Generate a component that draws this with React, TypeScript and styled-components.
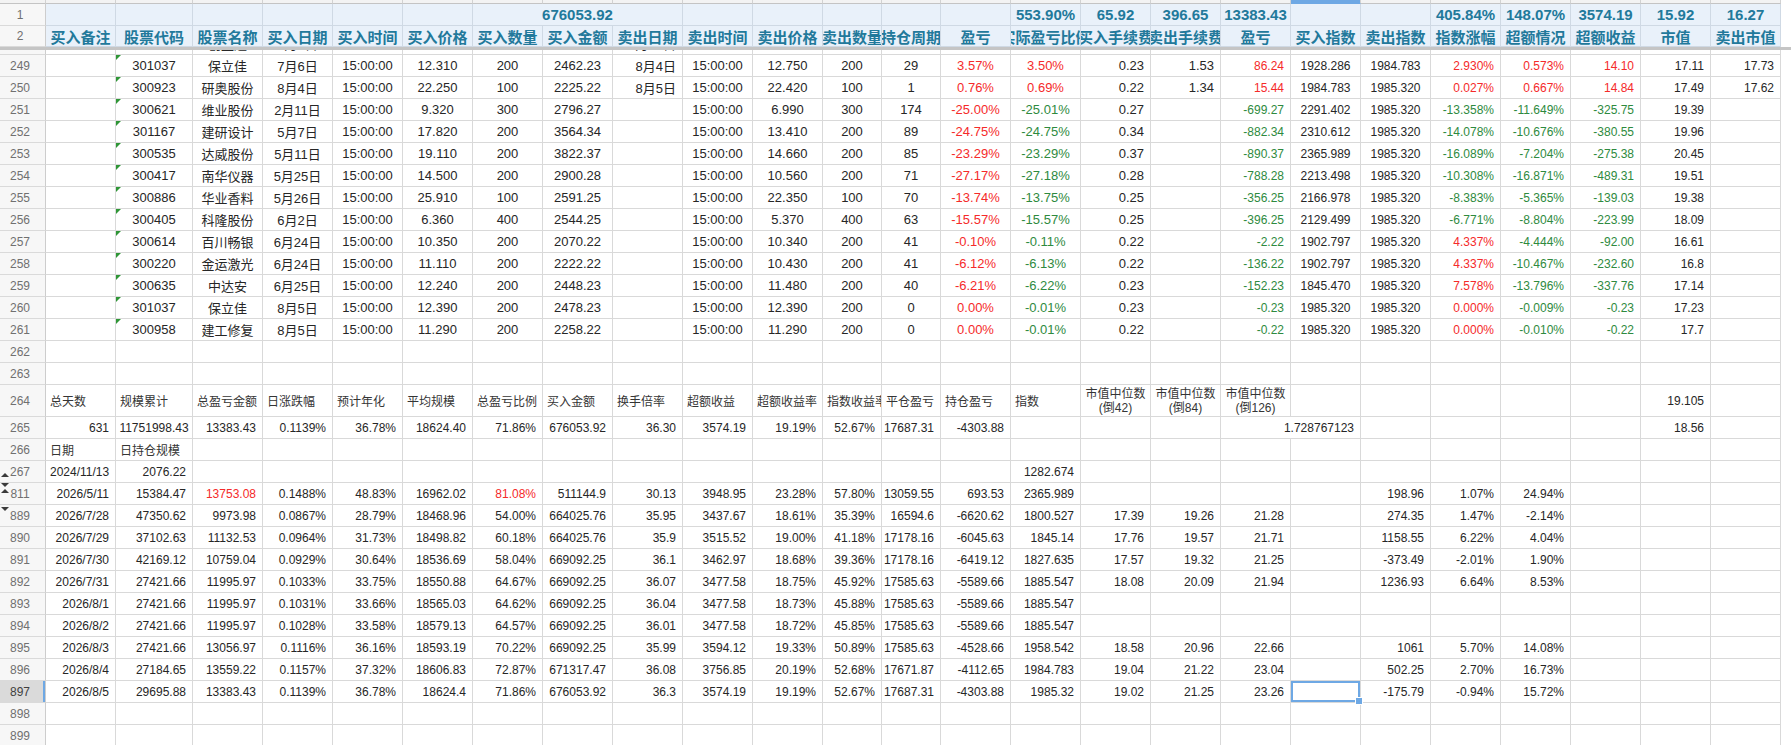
import React from "react";
import styled, { createGlobalStyle, css } from "styled-components";

type Align = "left" | "center" | "right";
type Tone = "plain" | "red" | "green" | "label";

interface Spec {
  v?: React.ReactNode;
  a?: Align;
  t?: Tone;
  span?: number;
  flag?: boolean;
  sel?: boolean;
  fs?: number;
}

// column widths: row numbers + 25 sheet columns
const COLS = [46, 70, 77, 70, 70, 70, 70, 70, 70, 70, 70, 70, 59, 59, 70, 70, 70, 70, 70, 70, 70, 70, 70, 70, 70, 70];
const GRID = COLS.map((w) => `${w}px`).join(" ");
const SELECTED_COL = 18;

const TONE: Record<Tone, string> = {
  plain: "#262626",
  red: "#f52a2a",
  green: "#2e8a3e",
  label: "#353535",
};

const GlobalStyle = createGlobalStyle`
  * { box-sizing: border-box; }
  html, body { margin: 0; padding: 0; background: #fff; overflow: hidden; }
  body { font-family: "Liberation Sans", "Noto Sans CJK SC", Arial, sans-serif; }
`;

const Sheet = styled.div`
  width: 1791px;
  height: 745px;
  overflow: hidden;
  display: flex;
  flex-direction: column;
  background: #fff;
`;

const Row = styled.div<{ $h?: number }>`
  display: grid;
  grid-template-columns: ${GRID};
  height: ${(p) => p.$h ?? 22}px;
  flex: none;
`;

const TopStrip = styled(Row)`
  height: 4px;
`;

const StripCell = styled.div<{ $active?: boolean }>`
  background: #f3f3f3;
  border-right: 1px solid #d2d2d2;
  border-bottom: 1px solid #c4c4c4;
  ${(p) =>
    p.$active &&
    css`
      background: #6ea8e4;
      border-bottom-color: #6ea8e4;
    `}
`;

const FrozenLine = styled.div`
  flex: none;
  height: 3px;
  background: #c5c5c5;
`;

// only the bottom sliver of the row above the scroll position shows
const PartialRow = styled.div`
  flex: none;
  height: 5px;
  overflow: hidden;
  display: flex;
  flex-direction: column;
  justify-content: flex-end;
`;

const RowNum = styled.div<{ $active?: boolean }>`
  position: relative;
  display: flex;
  align-items: center;
  justify-content: center;
  padding-right: 5px;
  font-size: 12px;
  color: ${(p) => (p.$active ? "#3f3f3f" : "#707070")};
  background: ${(p) => (p.$active ? "#dadada" : "#f7f7f7")};
  border-right: 1px solid #cdcdcd;
  border-bottom: 1px solid #dadada;
  ${(p) =>
    p.$active &&
    css`
      box-shadow: inset -2px 0 0 #6ea8e4;
    `}
`;

const Fold = styled.span<{ $dir: "up" | "down"; $top: number }>`
  position: absolute;
  left: 1px;
  top: ${(p) => p.$top}px;
  width: 0;
  height: 0;
  border-left: 4px solid transparent;
  border-right: 4px solid transparent;
  ${(p) => (p.$dir === "up" ? "border-bottom: 4px solid #3b3b3b;" : "border-top: 4px solid #3b3b3b;")}
`;

const HeadCell = styled.div<{ $span?: number }>`
  grid-column: span ${(p) => p.$span ?? 1};
  display: flex;
  align-items: center;
  justify-content: center;
  min-width: 0;
  overflow: hidden;
  white-space: nowrap;
  background: #e9f1fa;
  color: #22799b;
  font-size: 15px;
  font-weight: 700;
  border-right: 1px solid #cfd9e4;
  border-bottom: 1px solid #cfd9e4;
`;

const Cell = styled.div<{
  $align: Align;
  $tone: Tone;
  $span: number;
  $fs: number;
  $flag?: boolean;
  $sel?: boolean;
}>`
  position: relative;
  grid-column: span ${(p) => p.$span};
  display: flex;
  align-items: center;
  justify-content: ${(p) => (p.$align === "left" ? "flex-start" : p.$align === "center" ? "center" : "flex-end")};
  padding: ${(p) => (p.$align === "left" ? "0 0 0 4px" : p.$align === "center" ? "0" : "0 6px 0 0")};
  min-width: 0;
  overflow: hidden;
  white-space: nowrap;
  font-size: ${(p) => p.$fs}px;
  color: ${(p) => TONE[p.$tone]};
  border-right: 1px solid #d9d9d9;
  border-bottom: 1px solid #d9d9d9;

  ${(p) =>
    p.$flag &&
    css`
      &::before {
        content: "";
        position: absolute;
        left: 0;
        top: 0;
        border-top: 5px solid #2f9636;
        border-right: 5px solid transparent;
      }
    `}

  ${(p) =>
    p.$sel &&
    css`
      overflow: visible;
      z-index: 1;
      box-shadow: inset 0 0 0 2px #6ea8e4;
      &::after {
        content: "";
        position: absolute;
        right: -3px;
        bottom: -3px;
        width: 6px;
        height: 6px;
        background: #6ea8e4;
        border: 1px solid #fff;
      }
    `}
`;

const TwoLine = styled.span`
  display: flex;
  flex-direction: column;
  align-items: center;
  line-height: 14px;
`;

/* ---------- data ---------- */

const HEADERS = [
  "买入备注", "股票代码", "股票名称", "买入日期", "买入时间", "买入价格", "买入数量", "买入金额",
  "卖出日期", "卖出时间", "卖出价格", "卖出数量", "持仓周期", "盈亏", "实际盈亏比例", "买入手续费",
  "卖出手续费", "盈亏", "买入指数", "卖出指数", "指数涨幅", "超额情况", "超额收益", "市值", "卖出市值",
];

const TOTALS: { v: string; span?: number }[] = [
  { v: "" }, { v: "" }, { v: "" }, { v: "" }, { v: "" }, { v: "" },
  { v: "676053.92", span: 3 },
  { v: "" }, { v: "" }, { v: "" }, { v: "" }, { v: "" },
  { v: "553.90%" }, { v: "65.92" }, { v: "396.65" }, { v: "13383.43" },
  { v: "" }, { v: "" },
  { v: "405.84%" }, { v: "148.07%" }, { v: "3574.19" }, { v: "15.92" }, { v: "16.27" },
];

const TRADE_248 = ["", "300991", "创益通", "7月2日", "15:00:00", "17.300", "200", "3460.27", "7月31日", "15:00:00", "17.820", "200", "29", "3.01%", "2.94%", "0.27", "1.57", "101.76", "1855.632", "1918.271", "3.376%", "0.245%", "8.47", "16.95", "17.36"];

const TRADES: [number, string[]][] = [
  [249, ["", "301037", "保立佳", "7月6日", "15:00:00", "12.310", "200", "2462.23", "8月4日", "15:00:00", "12.750", "200", "29", "3.57%", "3.50%", "0.23", "1.53", "86.24", "1928.286", "1984.783", "2.930%", "0.573%", "14.10", "17.11", "17.73"]],
  [250, ["", "300923", "研奥股份", "8月4日", "15:00:00", "22.250", "100", "2225.22", "8月5日", "15:00:00", "22.420", "100", "1", "0.76%", "0.69%", "0.22", "1.34", "15.44", "1984.783", "1985.320", "0.027%", "0.667%", "14.84", "17.49", "17.62"]],
];

// open positions: code, name, date, buy, qty, amount, last, days, pl, real, fee, profit, buyIdx, idxChg, excess, excessAmt, mv
const OPEN: [number, string[]][] = [
  [251, ["300621", "维业股份", "2月11日", "9.320", "300", "2796.27", "6.990", "174", "-25.00%", "-25.01%", "0.27", "-699.27", "2291.402", "-13.358%", "-11.649%", "-325.75", "19.39"]],
  [252, ["301167", "建研设计", "5月7日", "17.820", "200", "3564.34", "13.410", "89", "-24.75%", "-24.75%", "0.34", "-882.34", "2310.612", "-14.078%", "-10.676%", "-380.55", "19.96"]],
  [253, ["300535", "达威股份", "5月11日", "19.110", "200", "3822.37", "14.660", "85", "-23.29%", "-23.29%", "0.37", "-890.37", "2365.989", "-16.089%", "-7.204%", "-275.38", "20.45"]],
  [254, ["300417", "南华仪器", "5月25日", "14.500", "200", "2900.28", "10.560", "71", "-27.17%", "-27.18%", "0.28", "-788.28", "2213.498", "-10.308%", "-16.871%", "-489.31", "19.51"]],
  [255, ["300886", "华业香料", "5月26日", "25.910", "100", "2591.25", "22.350", "70", "-13.74%", "-13.75%", "0.25", "-356.25", "2166.978", "-8.383%", "-5.365%", "-139.03", "19.38"]],
  [256, ["300405", "科隆股份", "6月2日", "6.360", "400", "2544.25", "5.370", "63", "-15.57%", "-15.57%", "0.25", "-396.25", "2129.499", "-6.771%", "-8.804%", "-223.99", "18.09"]],
  [257, ["300614", "百川畅银", "6月24日", "10.350", "200", "2070.22", "10.340", "41", "-0.10%", "-0.11%", "0.22", "-2.22", "1902.797", "4.337%", "-4.444%", "-92.00", "16.61"]],
  [258, ["300220", "金运激光", "6月24日", "11.110", "200", "2222.22", "10.430", "41", "-6.12%", "-6.13%", "0.22", "-136.22", "1902.797", "4.337%", "-10.467%", "-232.60", "16.8"]],
  [259, ["300635", "中达安", "6月25日", "12.240", "200", "2448.23", "11.480", "40", "-6.21%", "-6.22%", "0.23", "-152.23", "1845.470", "7.578%", "-13.796%", "-337.76", "17.14"]],
  [260, ["301037", "保立佳", "8月5日", "12.390", "200", "2478.23", "12.390", "0", "0.00%", "-0.01%", "0.23", "-0.23", "1985.320", "0.000%", "-0.009%", "-0.23", "17.23"]],
  [261, ["300958", "建工修复", "8月5日", "11.290", "200", "2258.22", "11.290", "0", "0.00%", "-0.01%", "0.22", "-0.22", "1985.320", "0.000%", "-0.010%", "-0.22", "17.7"]],
];

const openRow = (o: string[]) => [
  "", o[0], o[1], o[2], "15:00:00", o[3], o[4], o[5], "", "15:00:00", o[6], o[4], o[7], o[8], o[9], o[10],
  "", o[11], o[12], "1985.320", o[13], o[14], o[15], o[16], "",
];

const DAILY: [number, string[]][] = [
  [811, ["2026/5/11", "15384.47", "13753.08", "0.1488%", "48.83%", "16962.02", "81.08%", "511144.9", "30.13", "3948.95", "23.28%", "57.80%", "13059.55", "693.53", "2365.989", "", "", "", "", "198.96", "1.07%", "24.94%"]],
  [889, ["2026/7/28", "47350.62", "9973.98", "0.0867%", "28.79%", "18468.96", "54.00%", "664025.76", "35.95", "3437.67", "18.61%", "35.39%", "16594.6", "-6620.62", "1800.527", "17.39", "19.26", "21.28", "", "274.35", "1.47%", "-2.14%"]],
  [890, ["2026/7/29", "37102.63", "11132.53", "0.0964%", "31.73%", "18498.82", "60.18%", "664025.76", "35.9", "3515.52", "19.00%", "41.18%", "17178.16", "-6045.63", "1845.14", "17.76", "19.57", "21.71", "", "1158.55", "6.22%", "4.04%"]],
  [891, ["2026/7/30", "42169.12", "10759.04", "0.0929%", "30.64%", "18536.69", "58.04%", "669092.25", "36.1", "3462.97", "18.68%", "39.36%", "17178.16", "-6419.12", "1827.635", "17.57", "19.32", "21.25", "", "-373.49", "-2.01%", "1.90%"]],
  [892, ["2026/7/31", "27421.66", "11995.97", "0.1033%", "33.75%", "18550.88", "64.67%", "669092.25", "36.07", "3477.58", "18.75%", "45.92%", "17585.63", "-5589.66", "1885.547", "18.08", "20.09", "21.94", "", "1236.93", "6.64%", "8.53%"]],
  [893, ["2026/8/1", "27421.66", "11995.97", "0.1031%", "33.66%", "18565.03", "64.62%", "669092.25", "36.04", "3477.58", "18.73%", "45.88%", "17585.63", "-5589.66", "1885.547"]],
  [894, ["2026/8/2", "27421.66", "11995.97", "0.1028%", "33.58%", "18579.13", "64.57%", "669092.25", "36.01", "3477.58", "18.72%", "45.85%", "17585.63", "-5589.66", "1885.547"]],
  [895, ["2026/8/3", "27421.66", "13056.97", "0.1116%", "36.16%", "18593.19", "70.22%", "669092.25", "35.99", "3594.12", "19.33%", "50.89%", "17585.63", "-4528.66", "1958.542", "18.58", "20.96", "22.66", "", "1061", "5.70%", "14.08%"]],
  [896, ["2026/8/4", "27184.65", "13559.22", "0.1157%", "37.32%", "18606.83", "72.87%", "671317.47", "36.08", "3756.85", "20.19%", "52.68%", "17671.87", "-4112.65", "1984.783", "19.04", "21.22", "23.04", "", "502.25", "2.70%", "16.73%"]],
  [897, ["2026/8/5", "29695.88", "13383.43", "0.1139%", "36.78%", "18624.4", "71.86%", "676053.92", "36.3", "3574.19", "19.19%", "52.67%", "17687.31", "-4303.88", "1985.32", "19.02", "21.25", "23.26", "", "-175.79", "-0.94%", "15.72%"]],
];

const SUMMARY_LABELS = [
  "总天数", "规模累计", "总盈亏金额", "日涨跌幅", "预计年化", "平均规模", "总盈亏比例", "买入金额",
  "换手倍率", "超额收益", "超额收益率", "指数收益率", "平仓盈亏", "持仓盈亏", "指数",
];

/* ---------- spec builders ---------- */

const UP_ALIGN: Align[] = [
  "left", "center", "center", "center", "center", "center", "center", "center", "right", "center",
  "center", "center", "center", "center", "center", "right", "right", "right", "center", "center",
  "right", "right", "right", "right", "right",
];
const SIGNED = [14, 17, 20, 21, 22];

function tradeSpecs(vals: string[]): Spec[] {
  return vals.map((v, i) => ({
    v,
    a: UP_ALIGN[i],
    t: i === 13 ? "red" : SIGNED.includes(i) && v ? (v.startsWith("-") ? "green" : "red") : "plain",
    flag: i === 1,
    fs: i >= 17 ? 12 : 13,
  }));
}

function pad(specs: Spec[]): Spec[] {
  const used = specs.reduce((n, s) => n + (s.span ?? 1), 0);
  return [...specs, ...Array.from({ length: 25 - used }, () => ({}))];
}

function dailySpecs(vals: string[], red: number[] = [], sel?: number): Spec[] {
  return pad(vals.map((v, i) => ({ v, t: red.includes(i) ? "red" : "plain", sel: i === sel })));
}

const median = (n: number) => (
  <TwoLine>
    <span>市值中位数</span>
    <span>(倒{n})</span>
  </TwoLine>
);

const summaryHead: Spec[] = pad([
  ...SUMMARY_LABELS.map((v): Spec => ({ v, a: "left", t: "label" })),
  { v: median(42), a: "center", t: "label" },
  { v: median(84), a: "center", t: "label" },
  { v: median(126), a: "center", t: "label" },
  {}, {}, {}, {}, {},
  { v: "19.105" },
]);

const summaryValues: Spec[] = pad([
  { v: "631" }, { v: "11751998.43", a: "center" }, { v: "13383.43" }, { v: "0.1139%" }, { v: "36.78%" },
  { v: "18624.40" }, { v: "71.86%" }, { v: "676053.92" }, { v: "36.30" }, { v: "3574.19" },
  { v: "19.19%" }, { v: "52.67%" }, { v: "17687.31" }, { v: "-4303.88" },
  {}, {}, {},
  { v: "1.728767123", span: 2 },
  {}, {}, {}, {},
  { v: "18.56" },
]);

const dailyHead: Spec[] = pad([
  { v: "日期", a: "left", t: "label" },
  { v: "日持仓规模", a: "left", t: "label" },
]);

const firstDay: Spec[] = pad([
  { v: "2024/11/13", a: "left" }, { v: "2076.22" },
  {}, {}, {}, {}, {}, {}, {}, {}, {}, {}, {}, {},
  { v: "1282.674" },
]);

const blank: Spec[] = pad([]);

/* ---------- rows ---------- */

function SheetRow({
  num,
  cells,
  h,
  active,
  folds,
  fs = 12,
}: {
  num: number;
  cells: Spec[];
  h?: number;
  active?: boolean;
  folds?: React.ReactNode;
  fs?: number;
}) {
  return (
    <Row $h={h}>
      <RowNum $active={active}>
        {folds}
        {num}
      </RowNum>
      {cells.map((c, i) => (
        <Cell
          key={i}
          $align={c.a ?? "right"}
          $tone={c.t ?? "plain"}
          $span={c.span ?? 1}
          $fs={c.fs ?? fs}
          $flag={c.flag}
          $sel={c.sel}
        >
          {c.v}
        </Cell>
      ))}
    </Row>
  );
}

export default function App() {
  return (
    <>
      <GlobalStyle />
      <Sheet>
        <TopStrip>
          {COLS.map((_, i) => (
            <StripCell key={i} $active={i === SELECTED_COL + 1} />
          ))}
        </TopStrip>

        <Row>
          <RowNum>1</RowNum>
          {TOTALS.map((c, i) => (
            <HeadCell key={i} $span={c.span}>
              {c.v}
            </HeadCell>
          ))}
        </Row>
        <Row $h={21}>
          <RowNum>2</RowNum>
          {HEADERS.map((h, i) => (
            <HeadCell key={i}>{h}</HeadCell>
          ))}
        </Row>
        <FrozenLine />

        <PartialRow>
          <SheetRow num={248} cells={tradeSpecs(TRADE_248)} />
        </PartialRow>
        {TRADES.map(([n, vals]) => (
          <SheetRow key={n} num={n} cells={tradeSpecs(vals)} />
        ))}
        {OPEN.map(([n, vals]) => (
          <SheetRow key={n} num={n} cells={tradeSpecs(openRow(vals))} />
        ))}

        <SheetRow num={262} cells={blank} />
        <SheetRow num={263} cells={blank} />
        <SheetRow num={264} h={32} cells={summaryHead} />
        <SheetRow num={265} cells={summaryValues} />
        <SheetRow num={266} cells={dailyHead} />
        <SheetRow num={267} cells={firstDay} folds={<Fold $dir="up" $top={12} />} />

        {DAILY.map(([n, vals]) => (
          <SheetRow
            key={n}
            num={n}
            active={n === 897}
            cells={dailySpecs(vals, n === 811 ? [2, 6] : [], n === 897 ? SELECTED_COL : undefined)}
            folds={
              n === 811 ? (
                <>
                  <Fold $dir="down" $top={0} />
                  <Fold $dir="up" $top={6} />
                </>
              ) : n === 889 ? (
                <Fold $dir="down" $top={2} />
              ) : null
            }
          />
        ))}

        <SheetRow num={898} cells={blank} />
        <SheetRow num={899} cells={blank} />
      </Sheet>
    </>
  );
}
